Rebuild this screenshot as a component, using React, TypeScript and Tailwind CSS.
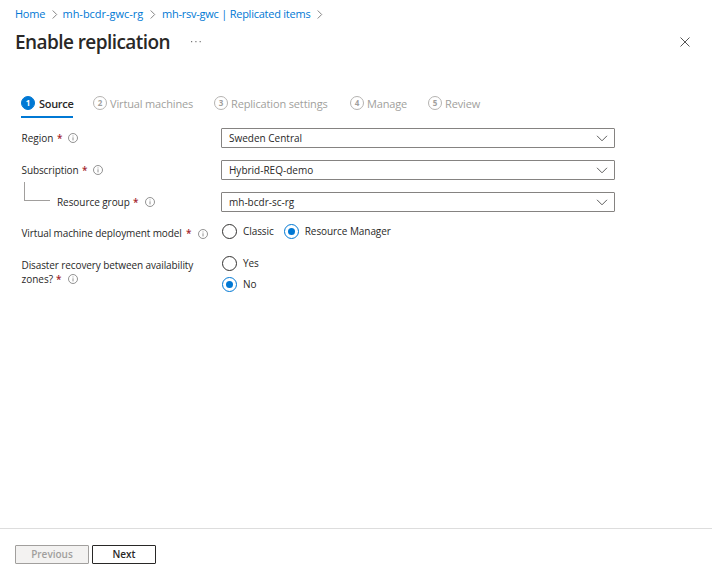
import React from 'react';

const Chevron = () => (
  <svg className="h-[10px] w-[6px] shrink-0" viewBox="0 0 6 10" fill="none" stroke="#777" strokeWidth="0.9">
    <path d="M0.7 1.5 L4.7 5.5 L0.7 9.5" />
  </svg>
);

const Info = () => (
  <svg className="h-[10px] w-[10px] shrink-0" viewBox="0 0 10 10" fill="none" stroke="#777" strokeWidth="0.8">
    <circle cx="5" cy="5" r="4.5" />
    <path d="M5 4.3 V7.4 M5 2.5 V3.4" />
  </svg>
);

const Star = () => <span className="w-[5px] shrink-0 text-[10px] font-semibold text-[#a4262c]">*</span>;

function Select({ value }: { value: string }) {
  return (
    <div className="flex h-5 w-[394px] items-center justify-between rounded-[1px] border border-[#858381] pr-[6px] pl-[7px]">
      <span>{value}</span>
      <svg className="h-[7px] w-[12px]" viewBox="0 0 12 7" fill="none" stroke="#555" strokeWidth="0.95">
        <path d="M1 0.8 L6 5.8 L11 0.8" />
      </svg>
    </div>
  );
}

function Radio({ checked = false, label }: { checked?: boolean; label: string }) {
  return (
    <div className="flex h-[15px] items-center gap-[6px]">
      <span className={`flex h-[15px] w-[15px] items-center justify-center rounded-full border ${checked ? 'border-[#0078d4]' : 'border-[#323130]'}`}>
        {checked && <span className="h-[7px] w-[7px] rounded-full bg-[#0078d4]" />}
      </span>
      <span className="-mt-px tracking-[-0.07px]">{label}</span>
    </div>
  );
}

function Step({ n, label, active = false, width }: { n: number; label: string; active?: boolean; width: number }) {
  return (
    <div
      className={`flex h-7 shrink-0 items-center gap-[3px] border-b-2 text-[11px] ${active ? 'border-[#0078d4] font-semibold text-[#292827]' : 'border-transparent text-[#a19f9d]'}`}
      style={{ width }}
    >
      <span
        className={`flex h-[14px] w-[14px] shrink-0 items-center justify-center rounded-full border text-[8px] leading-none font-bold ${active ? 'border-[#0078d4] bg-[#0078d4] text-white' : 'border-[#b5b3b1]'}`}
      >
        {n}
      </span>
      <span className={`pt-[2px] ${active ? 'pl-px tracking-[-0.3px]' : 'tracking-[-0.15px]'}`}>{label}</span>
    </div>
  );
}

export default function App() {
  return (
    <div className="flex h-[577px] w-[712px] flex-col overflow-hidden bg-white font-['Open_Sans','Noto_Sans',sans-serif] text-[10px] whitespace-nowrap text-[#292827]">
      <nav className="flex h-[28px] shrink-0 items-center pl-[15px] text-[11px] text-[#0078d4]">
        <span className="w-[37px] tracking-[-0.25px]">Home</span>
        <Chevron />
        <span className="ml-[4.5px] w-[87.5px] tracking-[-0.03px]">mh-bcdr-gwc-rg</span>
        <Chevron />
        <span className="ml-[6px] w-[155px] tracking-[-0.24px]">mh-rsv-gwc | Replicated items</span>
        <Chevron />
      </nav>
      <header className="flex h-[28px] shrink-0 items-center pr-[22px] pl-[15px]">
        <h1 className="w-[176px] text-[19px] font-semibold tracking-[-0.57px]">Enable replication</h1>
        <svg className="h-[2px] w-[10px]" viewBox="0 0 10 2" fill="#777">
          <path d="M0 0h1.2v1.2H0zM4.3 0h1.2v1.2H4.3zM8.6 0h1.2v1.2H8.6z" />
        </svg>
        <svg className="ml-auto h-[10px] w-[10px]" viewBox="0 0 10 10" stroke="#555" strokeWidth="1">
          <path d="M0.5 0.5 L9.5 9.5 M9.5 0.5 L0.5 9.5" />
        </svg>
      </header>
      <div className="mt-[34px] flex shrink-0 pl-[21px]">
        <Step n={1} label="Source" active width={52} />
        <div className="w-5" />
        <Step n={2} label="Virtual machines" width={121} />
        <Step n={3} label="Replication settings" width={136} />
        <Step n={4} label="Manage" width={78} />
        <Step n={5} label="Review" width={60} />
      </div>
      <main className="flex flex-1 flex-col pt-[10px] pl-[21.5px]">
        <div className="flex h-5 items-center">
          <div className="flex w-[199.5px] items-center">
            <span className="w-[35.5px]">Region</span>
            <Star />
            <span className="w-[6px]" />
            <Info />
          </div>
          <Select value="Sweden Central" />
        </div>
        <div className="mt-3 flex h-5 items-center">
          <div className="flex w-[199.5px] items-center">
            <span className="w-[60.5px] tracking-[-0.1px]">Subscription</span>
            <Star />
            <span className="w-[6px]" />
            <Info />
          </div>
          <Select value="Hybrid-REQ-demo" />
        </div>
        <div className="mt-3 flex h-5 items-center">
          <div className="flex w-[199.5px] items-center">
            <span className="mr-[7px] ml-[2.5px] h-[19px] w-[26px] -translate-y-[11px] border-b border-l border-[#a19f9d]" />
            <span className="w-[76px] tracking-[-0.06px]">Resource group</span>
            <Star />
            <span className="w-[7px]" />
            <Info />
          </div>
          <Select value="mh-bcdr-sc-rg" />
        </div>
        <div className="mt-[11px] flex h-[17px] items-center">
          <div className="flex w-[200.5px] items-center pt-[4px]">
            <span className="w-[164.5px] tracking-[-0.11px]">Virtual machine deployment model</span>
            <Star />
            <span className="w-[7px]" />
            <Info />
          </div>
          <div className="flex gap-[10px]">
            <Radio label="Classic" />
            <Radio checked label="Resource Manager" />
          </div>
        </div>
        <div className="mt-[16px] flex">
          <div className="w-[200.5px] pt-[2px] leading-[14px]">
            <div className="tracking-[-0.1px]">Disaster recovery between availability</div>
            <div className="flex items-center">
              <span className="w-[34.5px]">zones?</span>
              <Star />
              <span className="w-[7px]" />
              <Info />
            </div>
          </div>
          <div className="flex flex-col gap-[6px]">
            <Radio label="Yes" />
            <Radio checked label="No" />
          </div>
        </div>
      </main>
      <footer className="flex h-[49px] shrink-0 gap-[3px] border-t border-[#dddddd] pt-4 pl-[15px] font-semibold">
        <button className="h-[19px] w-[74px] rounded-[1px] border border-[#a19f9d] bg-[#f3f2f1] text-[#a19f9d]">Previous</button>
        <button className="h-[19px] w-[64px] rounded-[1px] border border-[#292827] bg-white">Next</button>
      </footer>
    </div>
  );
}
